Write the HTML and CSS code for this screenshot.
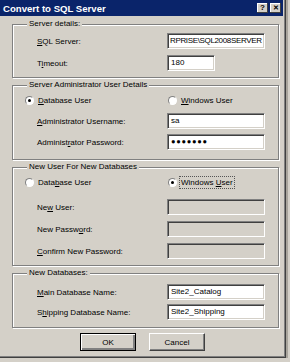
FILE: index.html
```html
<!DOCTYPE html>
<html lang="en">
<head>
  <meta charset="utf-8" />
  <meta name="viewport" content="width=device-width, initial-scale=1" />
  <title>Convert to SQL Server</title>
  <link rel="stylesheet" href="styles.css">
</head>
<body>
  <div class="dialog">
    <div class="titlebar">
      <span class="title">Convert to SQL Server</span>
      <span class="tbtns"><span class="tbtn">?</span><span class="tbtn close">&#x2715;</span></span>
    </div>

    <div class="content">
      <fieldset class="group g1">
        <legend>Server details:</legend>
        <div class="row"><label><u>S</u>QL Server:</label><div class="field tight">RPRISE\SQL2008SERVER</div></div>
        <div class="row"><label>T<u>i</u>meout:</label><div class="field short">180</div></div>
      </fieldset>

      <fieldset class="group g2">
        <legend>Server Administrator User Details</legend>
        <div class="radios">
          <span class="opt"><span class="radio on"></span><span><u>D</u>atabase User</span></span>
          <span class="opt"><span class="radio"></span><span><u>W</u>indows User</span></span>
        </div>
        <div class="row"><label><u>A</u>dministrator Username:</label><div class="field">sa</div></div>
        <div class="row"><label>Administ<u>r</u>ator Password:</label><div class="field pw">&#x25CF;&#x25CF;&#x25CF;&#x25CF;&#x25CF;&#x25CF;&#x25CF;</div></div>
      </fieldset>

      <fieldset class="group g3">
        <legend>New User For New Databases</legend>
        <div class="radios">
          <span class="opt"><span class="radio"></span><span>Data<u>b</u>ase User</span></span>
          <span class="opt"><span class="radio on"></span><span class="focus">Windows <u>U</u>ser</span></span>
        </div>
        <div class="row"><label>Ne<u>w</u> User:</label><div class="field off"></div></div>
        <div class="row"><label>New Passw<u>o</u>rd:</label><div class="field off"></div></div>
        <div class="row"><label><u>C</u>onfirm New Password:</label><div class="field off"></div></div>
      </fieldset>

      <fieldset class="group g4">
        <legend>New Databases:</legend>
        <div class="row"><label><u>M</u>ain Database Name:</label><div class="field">Site2_Catalog</div></div>
        <div class="row"><label>S<u>h</u>ipping Database Name:</label><div class="field">Site2_Shipping</div></div>
      </fieldset>

      <div class="buttons">
        <button class="btn default" type="button">OK</button>
        <button class="btn" type="button">Cancel</button>
      </div>
    </div>
  </div>
</body>
</html>
```

FILE: styles.css
```css
body{margin:0;background:#d4d0c8;font-family:"Liberation Sans",Arial,sans-serif;font-size:8px;color:#000}
.dialog{width:285px;height:357px;background:#d4d0c8;border-right:1px solid #404040;border-bottom:1px solid #404040;box-shadow:inset -1px -1px 0 #808080,2px 0 0 #a8a49c}
u{text-decoration:underline;text-underline-offset:1px}

/* title bar */
.titlebar{height:16px;margin-right:2px;background:#0a246a;color:#fff;display:flex;align-items:center;justify-content:space-between;padding:0 2px 0 3px}
.title{font-weight:bold;font-size:9.6px}
.tbtns{display:flex;gap:2px}
.tbtn{width:11px;height:10px;background:#d4d0c8;color:#000;font-weight:bold;font-size:8px;line-height:10px;text-align:center;box-sizing:border-box;box-shadow:inset -1px -1px 0 #404040,inset 1px 1px 0 #fff}
.tbtn.close{font-size:7px}

/* group boxes */
.content{padding:3px 0 0 12px}
.group{margin:0 0 2px;padding:4px 0 6px 12px;width:253px;border:1px solid #808080;box-shadow:inset 1px 1px 0 #fff,1px 1px 0 #fff;display:flex;flex-direction:column;gap:6px}
.group legend{padding:0 2px;margin-left:2px;line-height:10px;background:#d4d0c8}
.g2{padding-bottom:9px;gap:5px}
.g2 .radios{margin-bottom:1px}
.g3 .radios{margin-bottom:4px}
.g4{padding-top:6px;padding-bottom:7px;gap:4px}

.row{display:flex;align-items:center;height:16px}
.row label{width:130px;padding-left:12px;flex:none}
.field{width:98px;height:16px;box-sizing:border-box;background:#fff;border:1px solid;border-color:#808080 #fff #fff #808080;box-shadow:inset 1px 1px 0 #404040,inset -1px -1px 0 #d4d0c8;padding:0 0 0 3px;line-height:14px;white-space:nowrap;overflow:hidden}
.field.tight{letter-spacing:-0.35px;padding-left:2px}
.field.short{width:48px}
.field.off{background:#d4d0c8}
.field.pw{font-size:7.5px;letter-spacing:0.7px}

/* radio buttons */
.radios{display:flex;align-items:center;height:13px}
.opt{display:flex;align-items:center;gap:4px;width:143px}
.opt:last-child{width:auto}
.radio{width:9px;height:9px;border-radius:50%;box-sizing:border-box;background:#fff;border:1px solid;border-color:#808080 #fff #fff #808080;position:relative}
.radio.on::after{content:"";position:absolute;left:2px;top:2px;width:3px;height:3px;border-radius:50%;background:#000}
.focus{outline:1px dotted #555;outline-offset:1px}

/* buttons */
.buttons{display:flex;justify-content:center;gap:13px;margin:5px 12px 0 0}
.btn{width:56px;height:18px;font:8px "Liberation Sans",Arial,sans-serif;color:#000;background:#d4d0c8;border:1px solid;border-color:#fff #404040 #404040 #fff;box-shadow:inset -1px -1px 0 #808080;padding:0}
.btn.default{border:1px solid #000;box-shadow:inset 1px 1px 0 #fff,inset -2px -2px 0 #808080}
```
